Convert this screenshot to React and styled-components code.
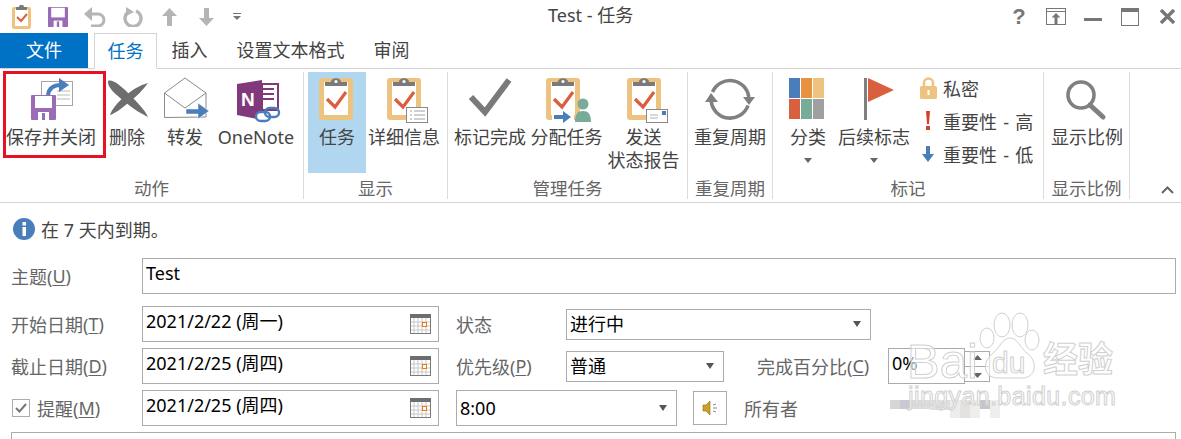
import React from 'react'
import styled, { createGlobalStyle } from 'styled-components'

const GlobalStyle = createGlobalStyle`
  html, body {
    margin: 0;
    padding: 0;
    background: #fff;
    overflow: hidden;
  }
  * {
    box-sizing: border-box;
  }
`

const BLUE = '#4a7ebb'
const RED = '#d9603f'
const TAN = '#eec27f'
const GREY = '#7a7a7a'

// ribbon icons share one 60x52 slot
const Big = ({ children }) => (
  <svg width="60" height="52" viewBox="0 0 60 52">
    {children}
  </svg>
)

const Clip = ({ x = 12, y = 6 }) => (
  <g transform={`translate(${x} ${y})`}>
    <rect width="34" height="42" rx="3" fill={TAN} />
    <rect x="5" y="4" width="24" height="33" fill="#fff" />
    <path d="M6 8V4h6c0-5 10-5 10 0h6v4z" fill={GREY} />
    <circle cx="17" cy="3.5" r="1.6" fill="#fff" />
    <path d="M8 21l8 8L27 14" fill="none" stroke={RED} strokeWidth="3.2" />
  </g>
)

const SaveDisk = ({ x, y }) => (
  <g transform={`translate(${x} ${y})`}>
    <path d="M1 0h23a1 1 0 0 1 1 1v23a1 1 0 0 1-1 1H1a1 1 0 0 1-1-1V1a1 1 0 0 1 1-1z" fill="#9a6cb5" />
    <rect x="4" y="1" width="17" height="12" fill="#fff" />
    <path d="M7 25v-8h11v8z" fill="#fff" />
    <rect x="11" y="18" width="3" height="7" fill="#9a6cb5" />
  </g>
)

const SaveCloseIcon = () => (
  <Big>
    <rect x="20.5" y="9.500" width="31" height="24" fill="#fff" stroke="#a6a6a6" />
    <path d="M36 19h13M36 23h13M36 27h13" stroke="#b8b8b8" />
    <path d="M27 23c1-7 6-10 13-10" fill="none" stroke={BLUE} strokeWidth="4" />
    <path d="M38 6l10 7-10 7z" fill={BLUE} />
    <SaveDisk x="10" y="23" />
  </Big>
)

const DeleteIcon = () => (
  <Big>
    <path d="M11 9C15 7 23 13 31 21C40 30 48 38 51 45C45 42 36 37 27 29C18 22 10 15 11 9z" fill="#6e6e6e" />
    <path d="M51 11C43 13 35 18 28 24C21 30 15 37 13 43C17 42 24 37 31 31C39 25 46 18 51 11z" fill="#6e6e6e" />
  </Big>
)

const ForwardIcon = () => (
  <Big>
    <path d="M9.5 45.5V21L30 6l21 15v24z" fill="#fff" stroke="#8a8a8a" />
    <path d="M9.5 21L30 36l21-15" fill="none" stroke="#8a8a8a" />
    <path d="M31 37h12v-6l11 8-11 8v-5H31z" fill={BLUE} stroke="#fff" strokeWidth=".5" />
  </Big>
)

const OneNoteIcon = () => (
  <Big>
    <path d="M36 12h16v26H36z" fill="#fff" stroke="#80397b" strokeWidth="2" />
    <path d="M37 17h11M37 22h11M37 27h11" stroke="#80397b" strokeWidth="2" />
    <path d="M11 12l25-4v40l-25-5z" fill="#80397b" />
    <text x="15" y="34" fontFamily="Liberation Sans" fontWeight="700" fontSize="19" fill="#fff">N</text>
    <rect x="30" y="40" width="14" height="9" rx="4.5" fill="#fff" stroke={BLUE} strokeWidth="2.4" />
    <rect x="39" y="36" width="14" height="9" rx="4.5" fill="none" stroke={BLUE} strokeWidth="2.4" />
  </Big>
)

const TaskIcon = () => (
  <Big>
    <Clip />
  </Big>
)

const DetailIcon = () => (
  <Big>
    <Clip x={13} />
    <rect x="32.5" y="35.5" width="21" height="15" fill="#fff" stroke="#8a8a8a" />
    <path d="M36 39h2M40 39h11M36 43h2M40 43h11M36 47h2M40 47h11" stroke="#a0a0a0" />
  </Big>
)

const CheckIcon = () => (
  <Big>
    <path d="M11 25l14 15 24-32" fill="none" stroke={GREY} strokeWidth="6" />
  </Big>
)

const AssignIcon = () => (
  <Big>
    <Clip x={9} />
    <rect x="15" y="38" width="22" height="12" fill="#fff" />
    <path d="M17 43h9v-4l8 6-8 6v-4h-9z" fill={BLUE} />
    <circle cx="46" cy="32" r="5.5" fill="#78ab98" />
    <path d="M38 50c0-8 3-11 8-11s8 3 8 11z" fill="#78ab98" />
  </Big>
)

const ReportIcon = () => (
  <Big>
    <Clip x={13} />
    <rect x="32.5" y="37.5" width="21" height="13" fill="#fff" stroke="#8a8a8a" />
    <rect x="48" y="39" width="4" height="4" fill={BLUE} />
    <path d="M36 43h8M36 46h8" stroke="#b0b0b0" />
  </Big>
)

const SyncIcon = () => (
  <Big>
    <path d="M12.500 20A19 19 0 0 1 48.800 25M48 33.500A19 19 0 0 1 11.200 29" fill="none" stroke="#808080" strokeWidth="3.6" />
    <path d="M5 30l6-9 7 9zM43 25h12l-6 8z" fill="#808080" />
  </Big>
)

const CategoryIcon = () => {
  const cells = [BLUE, '#e8913f', TAN, RED, '#78ab98', '#a0a0a0']
  return (
    <Big>
      {cells.map((c, i) => (
        <rect
          key={c}
          x={11 + (i % 3) * 12}
          y={6 + Math.floor(i / 3) * 21}
          width="11"
          height="20"
          fill={c}
        />
      ))}
    </Big>
  )
}

const FlagIcon = () => (
  <Big>
    <rect x="20" y="6" width="3" height="42" fill="#7f7f7f" />
    <path d="M24 6l26 12-26 12z" fill={RED} />
  </Big>
)

const ZoomIcon = () => (
  <Big>
    <circle cx="24" cy="23" r="13" fill="none" stroke="#808080" strokeWidth="3.6" />
    <path d="M33 33l13 12" stroke="#808080" strokeWidth="5" strokeLinecap="round" />
  </Big>
)

const CalendarIcon = () => (
  <svg width="21" height="20" viewBox="0 0 21 20">
    <rect x=".5" y=".5" width="20" height="19" fill="#fff" stroke="#7a7a7a" />
    <rect width="21" height="4" fill="#6e6e6e" />
    <path d="M4 4v15M8 4v15M12 4v15M16 4v15M1 8h19M1 12h19M1 16h19" stroke="#c8c8c8" />
    <rect x="12.5" y="8.5" width="4" height="4" fill="#fff" stroke="#e87a10" />
  </svg>
)

const Page = styled.div`
  position: relative;
  width: 1181px;
  height: 439px;
  overflow: hidden;
  background: #fff;
  font-family: "Noto Sans", "Noto Sans CJK SC", sans-serif;
  font-size: 18px;
  color: #444;
`

const TitleBar = styled.header`
  position: relative;
  display: flex;
  align-items: center;
  justify-content: space-between;
  height: 33px;
`

const Qat = styled.div`
  display: flex;
  align-items: center;
  padding-left: 11px;
`

const QatSlot = styled.div`
  display: flex;
  justify-content: center;
  flex: none;
  width: ${(p) => p.$w}px;
  margin-right: ${(p) => p.$gap || 0}px;
`

const Title = styled.div`
  position: absolute;
  left: 548px;
  top: 2px;
  font-size: 18px;
  line-height: 26px;
  color: #444;
`

const WindowControls = styled.div`
  display: flex;
  align-items: center;
  padding-right: 4px;
`

const Help = styled.span`
  width: 30px;
  margin-right: 2px;
  text-align: center;
  font: 700 22px "Liberation Sans", sans-serif;
  color: #777;
`

const TabBar = styled.nav`
  display: flex;
  height: 36px;
  border-bottom: 1px solid #d4d4d4;
`

const FileTab = styled.div`
  width: 88px;
  height: 35px;
  margin-right: 6px;
  background: #0072c6;
  color: #fff;
  text-align: center;
  line-height: 34px;
`

const Tab = styled.div`
  height: 36px;
  padding: 0 14.5px;
  line-height: 34px;
  ${(p) =>
    p.$active &&
    `
    width: 63px;
    padding: 0 12.5px;
    color: #0072c6;
    background: #fff;
    border: 1px solid #d4d4d4;
    border-bottom: 1px solid #fff;
  `}
`

const Ribbon = styled.section`
  position: relative;
  display: flex;
  height: 134px;
  border-bottom: 1px solid #d4d4d4;
`

const Group = styled.div`
  display: flex;
  flex-direction: column;
  width: ${(p) => p.$w}px;
  margin-top: 3px;
  margin-bottom: 3px;
  border-right: 1px solid #dcdcdc;
`

const GroupBody = styled.div`
  display: flex;
  height: 101px;
  padding-left: ${(p) => p.$pad || 0}px;
`

const GroupLabel = styled.div`
  margin-top: 3px;
  text-align: center;
  font-size: 17.5px;
  line-height: 24px;
  color: #666;
`

const RibbonButton = styled.div`
  display: flex;
  flex-direction: column;
  align-items: center;
  flex: none;
  width: ${(p) => p.$w}px;
  height: 101px;
  margin-left: ${(p) => p.$ml || 0}px;
  line-height: 23px;
  text-align: center;
  white-space: nowrap;
  background: ${(p) => (p.$on ? '#b1d6f0' : 'transparent')};
`

const ButtonIcon = styled.div`
  height: 52px;
  margin-bottom: 2px;
`

const Caret = styled.i`
  display: block;
  width: 0;
  height: 0;
  margin-top: 9px;
  border: 4px solid transparent;
  border-top: 5px solid #666;
  border-bottom: 0;
`

const SmallStack = styled.div`
  display: flex;
  flex-direction: column;
  margin-top: -1px;
  margin-left: 5px;
`

const SmallButton = styled.div`
  display: flex;
  align-items: center;
  height: 33px;
  white-space: nowrap;
  word-spacing: 1.5px;
`

const SmallIcon = styled.span`
  display: flex;
  justify-content: center;
  width: 24px;
  margin-right: 3px;
`

const Collapse = styled.svg`
  position: absolute;
  right: 7px;
  bottom: 8px;
`

const SaveHighlight = styled.div`
  position: absolute;
  left: 3px;
  top: 2px;
  width: 103px;
  height: 87px;
  border: 3px solid #e81123;
`

const InfoRow = styled.div`
  display: flex;
  align-items: center;
  gap: 6px;
  height: 52px;
  padding: 0 0 0 13px;
  color: #444;
`

const Form = styled.form`
  display: flex;
  flex-direction: column;
  padding: 3px 5px 0 11px;
`

const FormRow = styled.div`
  display: flex;
  align-items: center;
  height: 36px;
  margin-bottom: ${(p) => p.$gap || 6}px;
`

const Label = styled.label`
  display: flex;
  align-items: center;
  flex: none;
  width: ${(p) => p.$w}px;
  margin-left: ${(p) => p.$ml || 0}px;
  color: #666;
  white-space: nowrap;
  u {
    text-underline-offset: 2px;
  }
`

const Field = styled.div`
  display: flex;
  align-items: ${(p) => (p.$center ? 'center' : 'flex-start')};
  justify-content: space-between;
  flex: ${(p) => (p.$w ? 'none' : 1)};
  width: ${(p) => (p.$w ? `${p.$w}px` : 'auto')};
  height: ${(p) => p.$h || 36}px;
  margin-left: ${(p) => p.$ml || 0}px;
  padding: ${(p) => (p.$center ? '0 9px 0 3px' : '0 7px 0 3px')};
  border: 1px solid #ababab;
  color: #000;
  line-height: 28px;
`

const FieldIcon = styled.span`
  display: flex;
  margin-top: 7px;
`

const DropCaret = styled.i`
  display: block;
  width: 0;
  height: 0;
  border: 4.5px solid transparent;
  border-top: 6px solid #555;
  border-bottom: 0;
`

const CheckBox = styled.span`
  display: flex;
  align-items: center;
  justify-content: center;
  width: 18px;
  height: 18px;
  margin-left: 1px;
  margin-right: 7px;
  border: 1px solid #ababab;
`

const Percent = styled.div`
  flex: none;
  width: 77px;
  height: 36px;
  padding-left: 3px;
  border: 1px solid #ababab;
  color: #000;
  line-height: 28px;
`

const Spinner = styled.div`
  display: flex;
  flex-direction: column;
  align-items: center;
  justify-content: space-around;
  flex: none;
  width: 25px;
  height: 31px;
  border: 1px solid #ababab;
  border-left: 0;
`

const SpinLine = styled.span`
  width: 100%;
  height: 1px;
  background: #aaa;
`

const SoundButton = styled.div`
  display: flex;
  align-items: center;
  justify-content: center;
  flex: none;
  width: 34px;
  height: 34px;
  margin: 0 17px 0 16px;
  border: 1px solid #ababab;
`

const BodyBox = styled.div`
  height: 60px;
  border: 1px solid #ababab;
`

// baidu watermark lying over the form
const Watermark = styled.div`
  position: absolute;
  left: 905px;
  top: 335px;
  width: 225px;
  height: 85px;
  pointer-events: none;
  font-family: "Liberation Sans", "Noto Sans CJK SC", sans-serif;
  color: rgba(255, 255, 255, 0.6);
  -webkit-text-stroke: 1px #d0d0d0;
`

const MarkBai = styled.span`
  position: absolute;
  left: 2px;
  top: -2px;
  font-size: 49px;
  line-height: 56px;
`

const MarkDu = styled.span`
  position: absolute;
  left: 87px;
  top: 10px;
  font-size: 30px;
  line-height: 36px;
`

const MarkCn = styled.span`
  position: absolute;
  left: 138px;
  top: 3px;
  font-size: 35px;
  font-weight: 700;
  line-height: 44px;
`

const MarkUrl = styled.span`
  position: absolute;
  left: 3px;
  top: 47px;
  font-size: 25px;
  line-height: 28px;
  letter-spacing: 0.4px;
`

const MarkPaw = styled.svg`
  position: absolute;
  left: 69px;
  top: -27px;
`

// pixelated patch left over the owner's name
const Mosaic = styled.div`
  position: absolute;
  left: 890px;
  top: 400px;
  display: flex;
`

const MosaicCell = styled.span`
  width: ${(p) => p.$w}px;
  height: ${(p) => p.$h}px;
  background: ${(p) => p.$c};
`

const mosaicCells = [
  { w: 10, h: 9, c: '#d8d5d2' },
  { w: 10, h: 9, c: '#c8cad2' },
  { w: 20, h: 9, c: '#dcdcdc' },
  { w: 20, h: 10, c: '#e2e0de' },
  { w: 10, h: 18, c: '#ececec' },
  { w: 10, h: 18, c: '#e4e2e0' },
  { w: 10, h: 18, c: '#f0eeec' },
  { w: 10, h: 9, c: '#c4c6cc' },
  { w: 10, h: 18, c: '#eeeeee' },
]

const App = () => {
  return (
    <Page>
      <GlobalStyle />
      <TitleBar>
        <Qat>
          <QatSlot $w={22} $gap={14}>
            <svg width="20" height="24" viewBox="0 0 20 24">
              <rect y="2" width="19" height="22" rx="2" fill={TAN} />
              <rect x="3" y="4" width="13" height="17" fill="#fff" />
              <path d="M4 5V2h3c0-3 5-3 5 0h3v3z" fill={GREY} />
              <path d="M5 12l4 4 6-7" fill="none" stroke={RED} strokeWidth="2" />
            </svg>
          </QatSlot>
          <QatSlot $w={22} $gap={14}>
            <svg width="20" height="20" viewBox="0 0 25 25">
              <SaveDisk x="0" y="0" />
            </svg>
          </QatSlot>
          <QatSlot $w={24} $gap={14}>
            <svg width="22" height="20" viewBox="0 0 22 20">
              <path d="M4 7h10a6 6 0 0 1 0 12H7" fill="none" stroke="#b5b5b5" strokeWidth="3" />
              <path d="M8 0v14L0 7z" fill="#b5b5b5" />
            </svg>
          </QatSlot>
          <QatSlot $w={22} $gap={19}>
            <svg width="22" height="20" viewBox="0 0 22 20">
              <path d="M8 4.500A8 8 0 1 0 15 4" fill="none" stroke="#b5b5b5" strokeWidth="3.4" />
              <path d="M5 0v9l8-4z" fill="#b5b5b5" />
            </svg>
          </QatSlot>
          <QatSlot $w={15} $gap={22}>
            <svg width="15" height="18" viewBox="0 0 15 18">
              <path d="M7.500 0L15 8h-5v10H5V8H0z" fill="#b5b5b5" />
            </svg>
          </QatSlot>
          <QatSlot $w={15} $gap={19}>
            <svg width="15" height="18" viewBox="0 0 15 18">
              <path d="M7.500 18L15 10h-5V0H5v10H0z" fill="#b5b5b5" />
            </svg>
          </QatSlot>
          <QatSlot $w={8}>
            <svg width="8" height="7" viewBox="0 0 8 7">
              <path d="M0 0h8v1H0zM0 3h8L4 7z" fill="#777" />
            </svg>
          </QatSlot>
        </Qat>
        <Title>Test - 任务</Title>
        <WindowControls>
          <Help>?</Help>
          <svg width="20" height="17" viewBox="0 0 20 17" style={{ marginLeft: 10 }}>
            <rect x=".5" y=".5" width="19" height="16" fill="none" stroke="#777" />
            <path d="M0 3.500h20" stroke="#777" />
            <path d="M10 5l4.500 4.500H11.500V16h-3V9.500H5.500z" fill="#777" />
          </svg>
          <svg width="18" height="4" viewBox="0 0 18 4" style={{ marginLeft: 18, marginTop: 6 }}>
            <rect width="18" height="3" fill="#777" />
          </svg>
          <svg width="18" height="18" viewBox="0 0 18 18" style={{ marginLeft: 19 }}>
            <rect x=".5" y=".5" width="17" height="17" fill="none" stroke="#777" />
            <rect width="18" height="4" fill="#777" />
          </svg>
          <svg width="15" height="15" viewBox="0 0 15 15" style={{ marginLeft: 21, marginRight: 2 }}>
            <path d="M1 1l13 13M14 1L1 14" stroke="#777" strokeWidth="3.400" />
          </svg>
        </WindowControls>
      </TitleBar>

      <TabBar>
        <FileTab>文件</FileTab>
        <Tab $active>任务</Tab>
        <Tab>插入</Tab>
        <Tab>设置文本格式</Tab>
        <Tab>审阅</Tab>
      </TabBar>

      <Ribbon>
        <Group $w={304}>
          <GroupBody $pad={21}>
            <RibbonButton $w={60}>
              <ButtonIcon><SaveCloseIcon /></ButtonIcon>
              保存并关闭
            </RibbonButton>
            <RibbonButton $w={60} $ml={16}>
              <ButtonIcon><DeleteIcon /></ButtonIcon>
              删除
            </RibbonButton>
            <RibbonButton $w={60} $ml={-2}>
              <ButtonIcon><ForwardIcon /></ButtonIcon>
              转发
            </RibbonButton>
            <RibbonButton $w={60} $ml={11}>
              <ButtonIcon><OneNoteIcon /></ButtonIcon>
              OneNote
            </RibbonButton>
          </GroupBody>
          <GroupLabel>动作</GroupLabel>
        </Group>
        <Group $w={144}>
          <GroupBody $pad={4}>
            <RibbonButton $w={58} $on>
              <ButtonIcon><TaskIcon /></ButtonIcon>
              任务
            </RibbonButton>
            <RibbonButton $w={74} $ml={1}>
              <ButtonIcon><DetailIcon /></ButtonIcon>
              详细信息
            </RibbonButton>
          </GroupBody>
          <GroupLabel>显示</GroupLabel>
        </Group>
        <Group $w={240}>
          <GroupBody $pad={5}>
            <RibbonButton $w={74}>
              <ButtonIcon><CheckIcon /></ButtonIcon>
              标记完成
            </RibbonButton>
            <RibbonButton $w={74} $ml={2.5}>
              <ButtonIcon><AssignIcon /></ButtonIcon>
              分配任务
            </RibbonButton>
            <RibbonButton $w={74} $ml={3}>
              <ButtonIcon><ReportIcon /></ButtonIcon>
              发送
              <br />
              状态报告
            </RibbonButton>
          </GroupBody>
          <GroupLabel>管理任务</GroupLabel>
        </Group>
        <Group $w={85}>
          <GroupBody $pad={5}>
            <RibbonButton $w={74}>
              <ButtonIcon><SyncIcon /></ButtonIcon>
              重复周期
            </RibbonButton>
          </GroupBody>
          <GroupLabel>重复周期</GroupLabel>
        </Group>
        <Group $w={271}>
          <GroupBody $pad={5}>
            <RibbonButton $w={60}>
              <ButtonIcon><CategoryIcon /></ButtonIcon>
              分类
              <Caret />
            </RibbonButton>
            <RibbonButton $w={74} $ml={-1}>
              <ButtonIcon><FlagIcon /></ButtonIcon>
              后续标志
              <Caret />
            </RibbonButton>
            <SmallStack>
              <SmallButton>
                <SmallIcon>
                  <svg width="17" height="22" viewBox="0 0 17 22">
                    <path d="M4 10V6a4.500 4.500 0 0 1 9 0v4" fill="none" stroke={TAN} strokeWidth="2.500" />
                    <rect y="9" width="17" height="13" rx="1.500" fill={TAN} />
                    <rect x="7.500" y="13" width="2" height="5" fill="#fff" />
                  </svg>
                </SmallIcon>
                私密
              </SmallButton>
              <SmallButton>
                <SmallIcon>
                  <svg width="6" height="20" viewBox="0 0 6 20">
                    <path d="M1 0h4L4 13H2z" fill="#d9402b" />
                    <rect x="1" y="15" width="4" height="4" fill="#d9402b" />
                  </svg>
                </SmallIcon>
                重要性 - 高
              </SmallButton>
              <SmallButton>
                <SmallIcon>
                  <svg width="12" height="16" viewBox="0 0 12 16">
                    <path d="M4 0h4v8h4l-6 8-6-8h4z" fill={BLUE} />
                  </svg>
                </SmallIcon>
                重要性 - 低
              </SmallButton>
            </SmallStack>
          </GroupBody>
          <GroupLabel>标记</GroupLabel>
        </Group>
        <Group $w={86}>
          <GroupBody $pad={6}>
            <RibbonButton $w={74}>
              <ButtonIcon><ZoomIcon /></ButtonIcon>
              显示比例
            </RibbonButton>
          </GroupBody>
          <GroupLabel>显示比例</GroupLabel>
        </Group>
        <SaveHighlight />
        <Collapse width="13" height="8" viewBox="0 0 13 8">
          <path d="M1 7l5.500-5.500L12 7" fill="none" stroke="#666" strokeWidth="2" />
        </Collapse>
      </Ribbon>

      <InfoRow>
        <svg width="22" height="22" viewBox="0 0 22 22">
          <circle cx="11" cy="11" r="11" fill={BLUE} />
          <rect x="9.500" y="4" width="3.500" height="3.500" fill="#fff" />
          <rect x="9.500" y="9" width="3.500" height="9" fill="#fff" />
        </svg>
        在 7 天内到期。
      </InfoRow>

      <Form>
        <FormRow $gap={12}>
          <Label $w={131}>主题(<u>U</u>)</Label>
          <Field>Test</Field>
        </FormRow>
        <FormRow>
          <Label $w={131}>开始日期(<u>T</u>)</Label>
          <Field $w={297}>
            2021/2/22 (周一)
            <FieldIcon><CalendarIcon /></FieldIcon>
          </Field>
          <Label $w={110} $ml={17}>状态</Label>
          <Field $w={305} $h={31} $center>
            进行中
            <DropCaret />
          </Field>
        </FormRow>
        <FormRow>
          <Label $w={131}>截止日期(<u>D</u>)</Label>
          <Field $w={297}>
            2021/2/25 (周四)
            <FieldIcon><CalendarIcon /></FieldIcon>
          </Field>
          <Label $w={110} $ml={17}>优先级(<u>P</u>)</Label>
          <Field $w={158} $h={31} $center>
            普通
            <DropCaret />
          </Field>
          <Label $w={131} $ml={33}>完成百分比(<u>C</u>)</Label>
          <Percent>0%</Percent>
          <Spinner>
            <svg width="9" height="5" viewBox="0 0 9 5"><path d="M4.500 0L9 5H0z" fill="#666" /></svg>
            <SpinLine />
            <svg width="9" height="5" viewBox="0 0 9 5"><path d="M4.500 5L9 0H0z" fill="#666" /></svg>
          </Spinner>
        </FormRow>
        <FormRow>
          <Label $w={131}>
            <CheckBox>
              <svg width="12" height="10" viewBox="0 0 12 10">
                <path d="M1 5l3.500 3.500L11 1" fill="none" stroke="#777" strokeWidth="2" />
              </svg>
            </CheckBox>
            提醒(<u>M</u>)
          </Label>
          <Field $w={297}>
            2021/2/25 (周四)
            <FieldIcon><CalendarIcon /></FieldIcon>
          </Field>
          <Field $w={221} $center $ml={17}>
            8:00
            <DropCaret />
          </Field>
          <SoundButton>
            <svg width="16" height="16" viewBox="0 0 16 16">
              <path d="M1 5h3l4-4v14l-4-4H1z" fill="#c9a227" stroke="#8a6d12" strokeWidth=".6" />
              <path d="M11 5l3-1M11 8h4M11 11l3 1" stroke="#888" />
            </svg>
          </SoundButton>
          <Label $w={60}>所有者</Label>
        </FormRow>
        <BodyBox />
      </Form>

      <Mosaic>
        {mosaicCells.map((cell, i) => (
          <MosaicCell key={i} $w={cell.w} $h={cell.h} $c={cell.c} />
        ))}
      </Mosaic>
      <Watermark>
        <MarkPaw width="72" height="75" viewBox="0 0 72 75">
          <g fill="rgba(255,255,255,.6)" stroke="#d0d0d0">
            <ellipse cx="28" cy="17" rx="8" ry="12" />
            <ellipse cx="46" cy="17" rx="8" ry="12" />
            <ellipse cx="13" cy="30" rx="7" ry="10" />
            <ellipse cx="58" cy="32" rx="7" ry="10" />
            <path d="M36 30C28 30 26 40 18 46C8 54 9 70 24 70H48C62 70 64 54 54 46C46 40 44 30 36 30Z" />
          </g>
        </MarkPaw>
        <MarkBai>Bai</MarkBai>
        <MarkDu>du</MarkDu>
        <MarkCn>经验</MarkCn>
        <MarkUrl>jingyan.baidu.com</MarkUrl>
      </Watermark>
    </Page>
  )
}

export default App
